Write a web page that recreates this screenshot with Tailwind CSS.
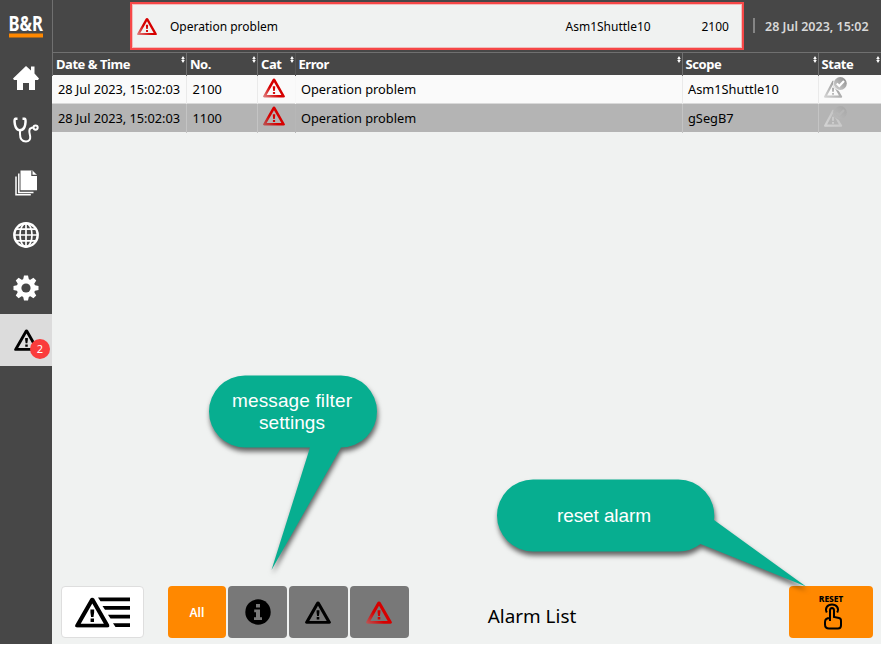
<!DOCTYPE html>
<html lang="en">
<head>
<meta charset="utf-8">
<title>Alarm List</title>
<script src="https://cdn.jsdelivr.net/npm/@tailwindcss/browser@4"></script>
</head>
<body class="bg-white font-['Noto_Sans',sans-serif] text-black overflow-hidden">
<svg class="absolute" width="0" height="0">
  <defs>
    <linearGradient id="red" x1="0" y1="1" x2=".75" y2=".35"><stop offset="0" stop-color="#e08a8a"/><stop offset=".6" stop-color="#d60000"/></linearGradient>
    <linearGradient id="redDark" x1="0" y1="1" x2=".7" y2=".4"><stop offset="0" stop-color="#b85a5a"/><stop offset=".6" stop-color="#d60000"/></linearGradient>
    <linearGradient id="gray" x1="0" y1="1" x2=".8" y2=".2"><stop offset="0" stop-color="#d6d6d6"/><stop offset="1" stop-color="#989898"/></linearGradient>
    <linearGradient id="grayFade" x1="0" y1="1" x2="1" y2="0"><stop offset="0" stop-color="#d4d4d4"/><stop offset="1" stop-color="#c0c0c0"/></linearGradient>
    <linearGradient id="discFade" x1="0" y1="1" x2="1" y2="0"><stop offset="0" stop-color="#bcbcbc"/><stop offset="1" stop-color="#a6a6a6"/></linearGradient>
    <symbol id="warn" viewBox="0 0 26 23"><path fill-rule="evenodd" d="M13 .4c.8 0 1.300.4 1.700 1.100L25.600 20.600c.7 1.200.2 2.100-1.200 2.100H1.600c-1.400 0-1.900-.9-1.200-2.100L11.300 1.500C11.700.8 12.200.4 13 .4zM13 4.800L4.300 19.900h17.400zM11.600 9.300h2.800v2.200l-.5 3.400h-1.800l-.5-3.400zM11.700 16.100h2.600v2.500h-2.600z"/></symbol>
    <symbol id="sort" viewBox="0 0 4 7"><path d="M.2 3L2 0l1.800 3zM.2 4h3.600L2 7zM1.500 2h1v3h-1z"/></symbol>
    <symbol id="ackTri" viewBox="0 0 23 21"><path fill-rule="evenodd" d="M9 3.500l.6.500a7.600 7.600 0 0 0 5.200 9.900L18 19.300c.4.800 0 1.400-.8 1.400H1c-.8 0-1.200-.6-.8-1.400L8.200 4.200zM9 7.500L3.100 18.600h11.800L12 13.300 9.500 9.500zM8 10.800h2v4H8zM8 16h2v1.700H8z"/></symbol>
  </defs>
</svg>

<div class="relative flex w-[881px] h-[644px] bg-[#f0f2f1]">
  <aside class="w-[52px] shrink-0 bg-[#474747] flex flex-col text-white">
    <div class="h-[52px] flex flex-col items-center">
      <svg width="52" height="52" viewBox="-8 -13 52 52"><text x=".5" y="18" textLength="34.500" lengthAdjust="spacingAndGlyphs" font-family="Noto Sans" font-weight="700" font-size="21.500" fill="#fff">B&amp;R</text><rect x="1" y="20.500" width="34" height="4" fill="#ff8800"/></svg>
    </div>
    <div class="h-[52px] flex items-center justify-center"><svg width="26" height="24" viewBox="0 0 26 24" fill="#fff"><path d="M13 0l5 4.500V.5h3.500v7L26 12.500 25 14h-3v10h-6v-7h-6v7H4V14H1l-1-1.500z"/></svg></div>
    <div class="h-[52px] flex items-center justify-center"><svg width="26" height="26" viewBox="0 0 26 26" fill="none" stroke="#fff" stroke-width="2"><path d="M4.500 1.800H2.300C1 2.500 1.600 7.500 2.700 10c.9 2.300 2 3 3.800 3.200 2.700.1 4.200-1 5-3.200 1-2.500 1.600-7.500.3-8.200H9.500" stroke-width="2.500"/><path d="M7 13v4c0 5 2.500 7.500 6 7.500 3 0 4.500-2 4.200-4.700-.2-3-2.200-6.500.2-8.400 1-.9 2-1 3.300-1"/><circle cx="22.600" cy="10.600" r="2.100"/></svg></div>
    <div class="h-[52px] flex items-center justify-center pt-[2px]"><svg width="22" height="26" viewBox="0 0 22 26"><path d="M5.500.5h12L22 5v15.300H5.500z" fill="#fff"/><path d="M16.900.5v4.800H22" fill="none" stroke="#474747" stroke-width="1.200"/><path d="M3.800 3.500v19h14.700M1 6.500v18.300h14.800" fill="none" stroke="#fff" stroke-width="1.500"/></svg></div>
    <div class="h-[53px] flex items-center justify-center"><svg width="26" height="26" viewBox="0 0 26 26" fill="none" stroke="#fff" stroke-width="1.700"><circle cx="13" cy="13" r="11.700" stroke-width="2.400"/><ellipse cx="13" cy="13" rx="6" ry="11.700"/><path d="M13 1v24M1 13h24M3 7.200h20M3 18.800h20"/></svg></div>
    <div class="h-[53px] flex items-center justify-center"><svg width="26" height="26" viewBox="-13 -13 26 26"><g fill="#fff"><circle r="9.300"/><g id="teeth"><path d="M-3-8l1-4.500h4l1 4.500zM-3 8l1 4.500h4l1-4.500zM-8-3l-4.500 1v4l4.500 1zM8-3l4.500 1v4l-4.500 1z"/></g><use href="#teeth" transform="rotate(45)"/></g><circle r="4.600" fill="#474747"/></svg></div>
    <div class="relative h-[52px] bg-[#dcdcdc] flex items-center pl-[14px]"><svg width="25" height="22"><use href="#warn"/></svg><span class="absolute left-[30px] top-[25px] size-[20px] rounded-full bg-[#fa3c3c] text-white text-[11px] leading-[20px] text-center">2</span></div>
  </aside>

  <div class="flex-1 flex flex-col min-w-0">
    <header class="h-[52px] bg-[#474747] border-l border-[#707070] flex items-start pt-[2px] pl-[77px]">
      <div class="w-[614px] h-[48px] bg-[#f0f2f1] border-2 border-[#f64747] outline outline-[#f64747]/30 -outline-offset-3 flex items-center text-[12px]">
        <svg class="ml-[5px] mt-[1px]" width="20" height="19" fill="url(#red)"><use href="#warn"/></svg>
        <span class="ml-[13px] mt-[1px] w-[395.500px]">Operation problem</span>
        <span class="w-[136px] mt-[1px]">Asm1Shuttle10</span>
        <span class="mt-[1px]">2100</span>
      </div>
      <div class="ml-[9px] mt-[16px] w-[1.500px] h-[15px] bg-[#858585]"></div>
      <div class="ml-[10.500px] mt-[16px] text-[12.500px] leading-[18px] font-semibold text-[#d8d8d8] whitespace-nowrap">28 Jul 2023, 15:02</div>
    </header>

    <div class="grid grid-cols-[134px_71px_38px_387px_136px_63px] h-[23px] bg-[#474747] border-t border-[#707070] text-white text-[13px] font-bold leading-[23px] tracking-[-0.450px]">
      <div class="relative border-l border-[#707070] pl-[3px]">Date &amp; Time<svg class="absolute right-[1px] top-[3px]" width="4" height="7" fill="#fff"><use href="#sort"/></svg></div>
      <div class="relative border-l border-[#707070] pl-[3px]">No.<svg class="absolute right-[1px] top-[3px]" width="4" height="7" fill="#fff"><use href="#sort"/></svg></div>
      <div class="relative border-l border-[#707070] pl-[3px]">Cat<svg class="absolute right-[1px] top-[3px]" width="4" height="7" fill="#fff"><use href="#sort"/></svg></div>
      <div class="relative border-l border-[#555] pl-[2.500px]">Error<svg class="absolute right-[1px] top-[3px]" width="4" height="7" fill="#fff"><use href="#sort"/></svg></div>
      <div class="relative border-l border-[#707070] pl-[2.500px]">Scope<svg class="absolute right-[1px] top-[3px]" width="4" height="7" fill="#fff"><use href="#sort"/></svg></div>
      <div class="relative border-l border-[#707070] pl-[2.500px]">State<svg class="absolute right-[1px] top-[3px]" width="4" height="7" fill="#fff"><use href="#sort"/></svg></div>
    </div>
    <div class="grid grid-cols-[134px_71px_38px_387px_136px_63px] h-[29px] bg-[#fafafa] border-b border-[#d9d9d9] text-[12.800px] leading-[29px] whitespace-nowrap">
      <div class="pl-[6px] tracking-[-0.040px]">28 Jul 2023, 15:02:03</div>
      <div class="border-l border-[#eaeaea] pl-[5.500px]">2100</div>
      <div class="border-l border-[#eaeaea] pl-[5px] pt-[3px]"><svg width="22" height="20" fill="url(#red)"><use href="#warn"/></svg></div>
      <div class="border-l border-[#f7f7f7] pl-[5px]">Operation problem</div>
      <div class="border-l border-[#eaeaea] pl-[5px]">Asm1Shuttle10</div>
      <div class="border-l border-[#eaeaea] pl-[5px] pt-[2px]"><svg width="23" height="21" viewBox="0 0 23 21"><use href="#ackTri" fill="url(#gray)"/><circle cx="16.300" cy="6.500" r="6.500" fill="url(#gray)"/><path d="M12.800 6.500l2.500 2.500 4.700-5" fill="none" stroke="#fff" stroke-width="2.200"/></svg></div>
    </div>
    <div class="grid grid-cols-[134px_71px_38px_387px_136px_63px] h-[28px] bg-[#b4b4b4] text-[12.800px] leading-[29px] whitespace-nowrap">
      <div class="pl-[6px] tracking-[-0.040px]">28 Jul 2023, 15:02:03</div>
      <div class="border-l border-[#c4c4c4] pl-[5.500px]">1100</div>
      <div class="border-l border-[#c4c4c4] pl-[5px] pt-[2px]"><svg width="22" height="20" fill="url(#redDark)"><use href="#warn"/></svg></div>
      <div class="border-l border-[#b7b7b7] pl-[5px]">Operation problem</div>
      <div class="border-l border-[#c4c4c4] pl-[5px]">gSegB7</div>
      <div class="border-l border-[#c4c4c4] pl-[5px] pt-[2px]"><svg width="23" height="21" viewBox="0 0 23 21"><use href="#ackTri" fill="url(#grayFade)"/><circle cx="16.300" cy="6.500" r="6.500" fill="url(#discFade)"/><path d="M12.800 6.500l2.500 2.500 4.700-5" fill="none" stroke="#b7b7b7" stroke-width="2.200"/></svg></div>
    </div>

    <main class="flex-1"></main>

    <footer class="h-[58px] flex items-start pl-[9px] pr-[8px]">
      <button class="w-[83px] h-[52px] rounded-[4px] bg-white border border-[#dedede] flex items-center pl-[13px]">
        <svg width="55" height="31" viewBox="0 0 55 31"><path d="M23 .5h32v3.800H25.500zM27.500 9H55v3.800H30zM33 17.700h22v3.800H35.500zM38 26.300h17v3.800H40.500z"/><g transform="translate(0 .2) scale(1.330)"><use href="#warn" width="26" height="23"/></g></svg>
      </button>
      <div class="ml-[23.500px] flex gap-[2px]">
        <button class="w-[58.800px] h-[52px] rounded-[4px] bg-[#ff8800] text-white text-[12px] font-semibold pt-[1px]">All</button>
        <button class="w-[58.800px] h-[52px] rounded-[4px] bg-[#787878] flex items-center justify-center"><svg width="26" height="26" viewBox="0 0 26 26"><circle cx="13" cy="13" r="12.700"/><path d="M11 5h4v3.600h-4zM9.200 10.500H15v7.700h2V21H9v-2.800h2v-5H9.200z" fill="#787878"/></svg></button>
        <button class="w-[58.800px] h-[52px] rounded-[4px] bg-[#787878] flex items-center justify-center"><svg width="26" height="23"><use href="#warn"/></svg></button>
        <button class="w-[58.800px] h-[52px] rounded-[4px] bg-[#787878] flex items-center justify-center"><svg width="26" height="23" fill="url(#redDark)"><use href="#warn"/></svg></button>
      </div>
      <h1 class="ml-[79px] mt-[17px] text-[18.900px] leading-[26px]">Alarm List</h1>
      <button class="ml-auto w-[84px] h-[52px] rounded-[4px] bg-[#ff8800] flex flex-col items-center pt-[8px]">
        <span class="text-[8.500px] leading-[9px] font-extrabold -tracking-[0.100px]">RESET</span>
        <svg class="ml-[3px]" width="20" height="27" viewBox="0 0 20 27" fill="none" stroke="#000" stroke-width="2"><path d="M3.800 9.500C1.500 5 4.500 1.500 9 1.500s7.500 3.500 5.200 8"/><path d="M7 18V7.500c0-3.400 4-3.400 4 0V14l5 1c1.500.4 2 1.200 2 2.700v4.600c0 2-1 3.200-3 3.200H6c-2.500 0-4-1.500-4-4v-2.500C2 16.500 4 15 7 15"/></svg>
      </button>
    </footer>
  </div>

  <svg class="absolute inset-0 pointer-events-none" width="881" height="644" font-family="Liberation Sans, sans-serif" font-size="19" fill="#fff">
    <defs><filter id="shadow" x="-10%" y="-10%" width="125%" height="125%" color-interpolation-filters="sRGB"><feDropShadow dx="1" dy="4" stdDeviation="2.500" flood-color="#000" flood-opacity=".6"/></filter></defs>
    <path filter="url(#shadow)" fill="#07ae90" d="M245 375.500h96a36 36 0 0 1 0 72L271.500 570 310 447.500H245a36 36 0 0 1 0-72z"/>
    <path filter="url(#shadow)" fill="#07ae90" d="M533 479.500h145a36 36 0 0 1 36 40.500L806 586.500 700.500 544a36 36 0 0 1-22.500 7.500H533a36 36 0 0 1 0-72z"/>
    <text x="232" y="407" textLength="120">message filter</text>
    <text x="259" y="429" textLength="66">settings</text>
    <text x="557" y="522" textLength="94">reset alarm</text>
  </svg>
</div>
</body>
</html>
